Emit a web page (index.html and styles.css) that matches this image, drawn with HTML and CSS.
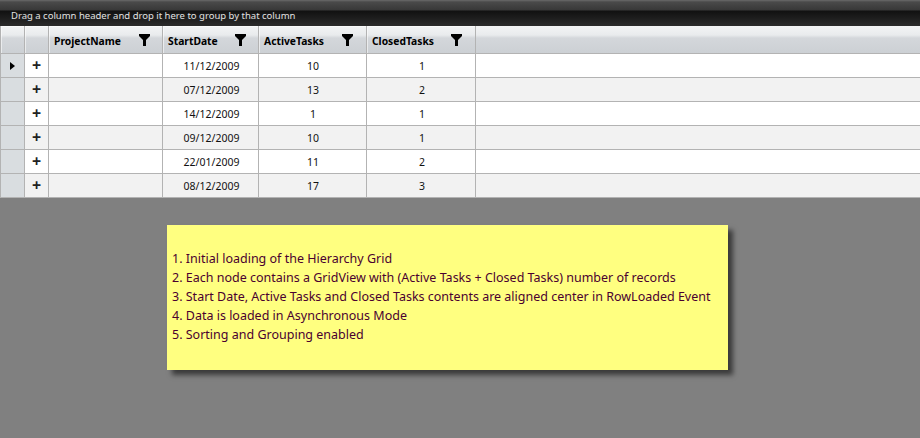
FILE: index.html
```html
<!DOCTYPE html>
<html lang="en">
<head>
<meta charset="utf-8">
<title>Hierarchy Grid</title>
<link rel="stylesheet" href="styles.css">
</head>
<body>
<div class="page">
  <div class="group-panel"><span class="group-text">Drag a column header and drop it here to group by that column</span></div>
  <div class="grid">
    <div class="row head">
      <div class="cell c-ind"></div>
      <div class="cell c-exp"></div>
      <div class="cell c-name"><span>ProjectName</span><svg class="filter" viewBox="0 0 11 12"><path d="M0 0H11V2L7 6V12H4V6L0 2Z"/></svg></div>
      <div class="cell c-date"><span>StartDate</span><svg class="filter" viewBox="0 0 11 12"><path d="M0 0H11V2L7 6V12H4V6L0 2Z"/></svg></div>
      <div class="cell c-act"><span>ActiveTasks</span><svg class="filter" viewBox="0 0 11 12"><path d="M0 0H11V2L7 6V12H4V6L0 2Z"/></svg></div>
      <div class="cell c-cls"><span>ClosedTasks</span><svg class="filter" viewBox="0 0 11 12"><path d="M0 0H11V2L7 6V12H4V6L0 2Z"/></svg></div>
      <div class="cell c-fill"></div>
    </div>
    <div class="row">
      <div class="cell c-ind"><svg class="arrow" viewBox="0 0 5 8"><path d="M0 0L5 4L0 8Z"/></svg></div>
      <div class="cell c-exp">+</div><div class="cell c-name"></div>
      <div class="cell c-date">11/12/2009</div><div class="cell c-act">10</div><div class="cell c-cls">1</div><div class="cell c-fill"></div>
    </div>
    <div class="row alt">
      <div class="cell c-ind"></div>
      <div class="cell c-exp">+</div><div class="cell c-name"></div>
      <div class="cell c-date">07/12/2009</div><div class="cell c-act">13</div><div class="cell c-cls">2</div><div class="cell c-fill"></div>
    </div>
    <div class="row">
      <div class="cell c-ind"></div>
      <div class="cell c-exp">+</div><div class="cell c-name"></div>
      <div class="cell c-date">14/12/2009</div><div class="cell c-act">1</div><div class="cell c-cls">1</div><div class="cell c-fill"></div>
    </div>
    <div class="row alt">
      <div class="cell c-ind"></div>
      <div class="cell c-exp">+</div><div class="cell c-name"></div>
      <div class="cell c-date">09/12/2009</div><div class="cell c-act">10</div><div class="cell c-cls">1</div><div class="cell c-fill"></div>
    </div>
    <div class="row">
      <div class="cell c-ind"></div>
      <div class="cell c-exp">+</div><div class="cell c-name"></div>
      <div class="cell c-date">22/01/2009</div><div class="cell c-act">11</div><div class="cell c-cls">2</div><div class="cell c-fill"></div>
    </div>
    <div class="row alt">
      <div class="cell c-ind"></div>
      <div class="cell c-exp">+</div><div class="cell c-name"></div>
      <div class="cell c-date">08/12/2009</div><div class="cell c-act">17</div><div class="cell c-cls">3</div><div class="cell c-fill"></div>
    </div>
  </div>
  <div class="stage">
    <div class="note">
      <p>1. Initial loading of the Hierarchy Grid</p>
      <p>2. Each node contains a GridView with (Active Tasks + Closed Tasks) number of records</p>
      <p>3. Start Date, Active Tasks and Closed Tasks contents are aligned center in RowLoaded Event</p>
      <p>4. Data is loaded in Asynchronous Mode</p>
      <p>5. Sorting and Grouping enabled</p>
    </div>
  </div>
</div>
</body>
</html>
```
FILE: styles.css
```css
* { box-sizing: border-box; }
html, body { margin: 0; padding: 0; }
body { font-family: "Noto Sans", "Open Sans", sans-serif; background: #808080; }
.page { width: 920px; height: 438px; overflow: hidden; display: flex; flex-direction: column; }

.group-panel {
  height: 26px;
  padding: 9px 0 0 11px;
  background: linear-gradient(#6a6a6a 0, #4a4a4a 2px, #383838 10px, #111 11px, #2b2b2b 26px);
  color: #e2e2e2;
  font-size: 9.5px;
  line-height: 13px;
}

.grid { display: flex; flex-direction: column; }
.row {
  display: flex;
  height: 24px;
  background: #fff;
  border-bottom: 1px solid #b3b3b3;
  color: #111;
  font-size: 10.5px;
}
.row.alt { background: #f2f2f2; }
.row.head {
  height: 28px;
  background: linear-gradient(#f3f4f5 0, #e9ebed 9px, #d4d7db 12px, #ccd0d4 27px);
  font-size: 10.3px;
  font-weight: 700;
  color: #000;
}

.cell {
  display: flex;
  align-items: center;
  justify-content: center;
  border-right: 1px solid #b3b3b3;
  padding-top: 1px;
}
.c-ind { width: 25px; background: #d9dde0; border-left: 1px solid #b3b3b3; }
.c-exp { width: 24px; font-size: 16px; font-weight: 700; color: #222; line-height: 1; padding: 0 0 1px; }
.c-name { width: 114px; }
.c-date { width: 96px; padding-left: 2px; }
.c-act { width: 108px; padding-left: 1px; }
.c-cls { width: 109px; padding-left: 2px; }
.c-fill { flex: 1; border-right: 0; }

.head .cell { justify-content: space-between; padding: 2px 12px 0 5px; box-shadow: inset 1px 1px 0 rgba(255,255,255,.55); }
.head .c-ind { background: transparent; }
.head .c-exp, .head .c-fill { padding: 0; }
.head .c-fill { box-shadow: none; }
.head .c-act, .head .c-cls { padding-right: 13px; }

.filter { width: 11px; height: 12px; fill: #000; flex: none; margin-bottom: 1px; }
.arrow { width: 5px; height: 8px; fill: #000; }

.stage { flex: 1; padding: 27px 0 0 167px; }
.note {
  width: 561px;
  height: 145px;
  padding: 24px 0 0 5px;
  background: #ffff80;
  box-shadow: 5px 5px 5px rgba(0,0,0,.55);
  color: #4a0030;
  font-size: 12.5px;
  line-height: 19px;
}
.note p { margin: 0; }
```
